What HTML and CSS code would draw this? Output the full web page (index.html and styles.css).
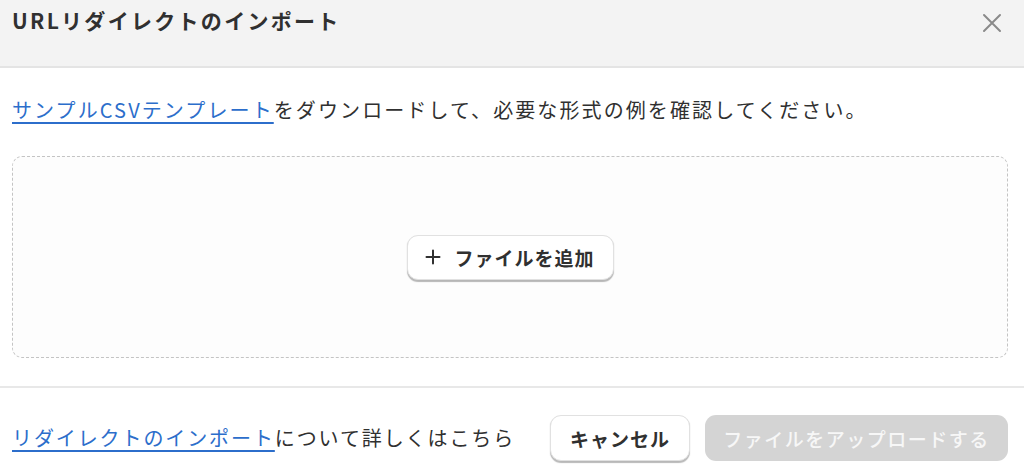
FILE: index.html
```html
<!DOCTYPE html>
<html lang="ja">
<head>
<meta charset="utf-8">
<title>URLリダイレクトのインポート</title>
<link rel="stylesheet" href="styles.css">
</head>
<body>
<div class="modal">
  <header class="modal-header">
    <h1 class="title">URLリダイレクトのインポート</h1>
    <button class="close" aria-label="閉じる">
      <svg width="20" height="20" viewBox="0 0 20 20"><path d="M2 2L18 18M18 2L2 18" stroke="#8a8a8a" stroke-width="2" stroke-linecap="round"/></svg>
    </button>
  </header>
  <main class="modal-body">
    <p class="intro"><a href="#" class="link">サンプルCSVテンプレート</a>をダウンロードして、必要な形式の例を確認してください。</p>
    <div class="dropzone">
      <button class="btn btn-add">
        <svg class="plus" width="16" height="16" viewBox="0 0 16 16"><path d="M8 1.5V14.5M1.5 8H14.5" stroke="#303030" stroke-width="2" stroke-linecap="round"/></svg>
        <span>ファイルを追加</span>
      </button>
    </div>
  </main>
  <footer class="modal-footer">
    <p class="help"><a href="#" class="link">リダイレクトのインポート</a>について詳しくはこちら</p>
    <div class="actions">
      <button class="btn btn-cancel">キャンセル</button>
      <button class="btn btn-upload" disabled>ファイルをアップロードする</button>
    </div>
  </footer>
</div>
</body>
</html>
```
FILE: styles.css
```css
* { box-sizing: border-box; }
html, body { margin: 0; padding: 0; background: #ffffff; }
body {
  font-family: "Noto Sans CJK JP", "Noto Sans", sans-serif;
  color: #303030;
  width: 1024px;
  height: 476px;
  overflow: hidden;
}
.modal { display: flex; flex-direction: column; }
.modal-header {
  height: 68px;
  background: #f3f3f3;
  border-bottom: 2px solid #e4e4e4;
  display: flex;
  justify-content: space-between;
  align-items: flex-start;
  padding: 5px 22px 0 12px;
}
.title {
  margin: 0;
  font-size: 21px;
  font-weight: 700;
  line-height: 30px;
  letter-spacing: 2.3px;
  color: #303030;
}
.close {
  background: none;
  border: 0;
  padding: 0;
  margin-top: 8px;
  width: 20px;
  height: 20px;
  display: flex;
}
.modal-body { padding: 28px 16px 28px 12px; }
.intro {
  margin: 0;
  font-size: 20px;
  line-height: 28px;
  letter-spacing: 2.1px;
}
.link { color: #2c6ecb; text-decoration: underline; text-underline-offset: 4px; text-decoration-thickness: 2px; }
.dropzone {
  margin-top: 32px;
  height: 202px;
  border: 1px dashed #c4c4c4;
  border-radius: 10px;
  background: #fdfdfd;
  display: flex;
  align-items: center;
  justify-content: center;
}
.btn {
  font-family: inherit;
  border-radius: 11px;
  cursor: pointer;
}
.btn-add {
  width: 207px;
  height: 45px;
  background: #ffffff;
  border: 1px solid #e1e1e1;
  box-shadow: 0 1.5px 1px rgba(0,0,0,0.28);
  display: flex;
  align-items: center;
  justify-content: center;
  gap: 13px;
  font-size: 19px;
  font-weight: 700;
  letter-spacing: 1px;
  color: #303030;
  padding: 0;
}
.plus { flex: none; }
.modal-footer {
  border-top: 2px solid #e8e8e8;
  padding: 27px 16px 0 12px;
  display: flex;
  align-items: center;
  justify-content: space-between;
}
.help {
  margin: 0;
  font-size: 20px;
  line-height: 28px;
  letter-spacing: 1.9px;
}
.actions { display: flex; gap: 15px; }
.btn-cancel {
  width: 140px;
  height: 46px;
  background: #ffffff;
  border: 1px solid #e1e1e1;
  box-shadow: 0 1.5px 1px rgba(0,0,0,0.28);
  font-size: 19px;
  font-weight: 700;
  letter-spacing: 1px;
  color: #303030;
}
.btn-upload {
  width: 303px;
  height: 46px;
  background: #d4d4d4;
  border: 0;
  font-size: 19px;
  font-weight: 500;
  letter-spacing: 1.5px;
  color: #f7f7f7;
}
```
